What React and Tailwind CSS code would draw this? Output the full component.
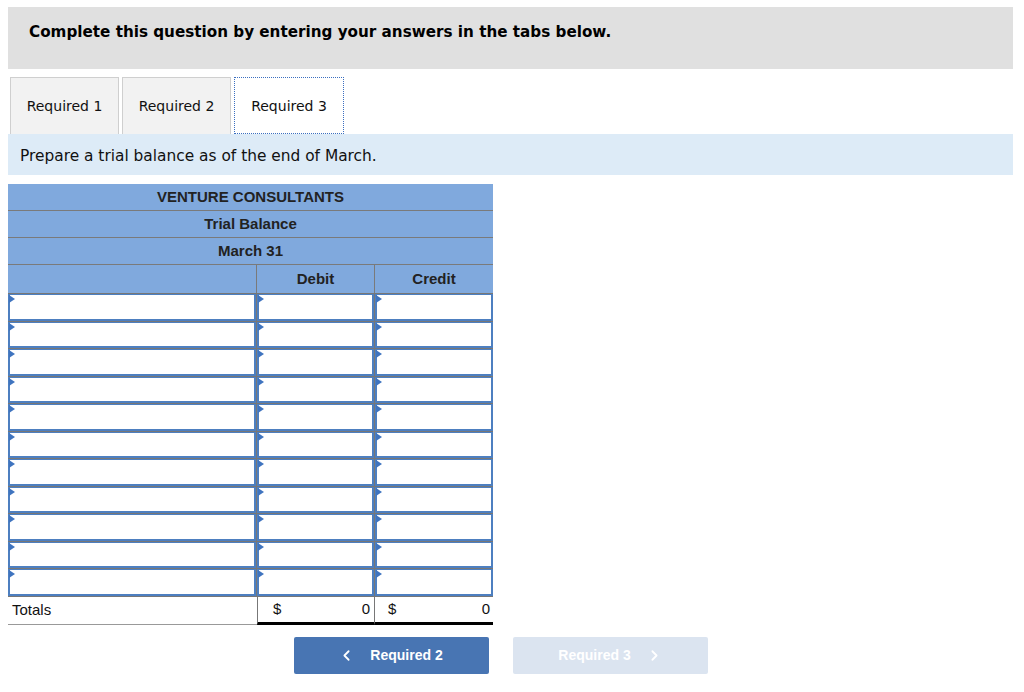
import { ChevronLeft, ChevronRight } from 'lucide-react'

const verdana = { fontFamily: 'Verdana, "DejaVu Sans", sans-serif' }

function Tab({ label, active }) {
  return active ? (
    <div className="w-[110px] h-[57px] bg-white border border-dotted border-[#3b6fc0] flex items-center justify-center pt-[2px] text-[14px] text-[#111]">{label}</div>
  ) : (
    <div className="w-[109px] h-[57px] bg-[#f2f2f2] border border-b-0 border-[#cfcfcf] flex items-center justify-center pt-[1px] text-[14px] text-[#111]">{label}</div>
  )
}

function InputCell() {
  return (
    <div className="h-full border-r border-[#777]">
      <div className="relative h-full border-2 border-[#4d7fc0] border-t-[1px] bg-white">
        <span className="absolute left-[-1px] top-0 w-0 h-0 border-y-[4px] border-y-transparent border-l-[6px] border-l-[#3f74bf]" />
      </div>
    </div>
  )
}

export default function App() {
  const rows = Array.from({ length: 11 })
  return (
    <div className="w-[1024px] h-[692px] bg-white pt-[7px] pl-[8px] pr-[11px]" style={verdana}>
      <div className="h-[62px] bg-[#e0e0e0] pl-[21px] pt-[16px]">
        <h1 className="text-[15.2px] leading-[18px] font-bold text-black">Complete this question by entering your answers in the tabs below.</h1>
      </div>
      <div className="flex gap-[3px] pl-[2px] mt-[8px]">
        <Tab label="Required 1" />
        <Tab label="Required 2" />
        <Tab label="Required 3" active />
      </div>
      <div className="h-[41px] bg-[#ddebf7] flex items-center pl-[12px] pt-[4px] text-[15.4px] text-[#111]">Prepare a trial balance as of the end of March.</div>

      <div className="mt-[9px] w-[485px] text-[15px] text-[#222]" style={{ fontFamily: 'Arial, "Liberation Sans", sans-serif' }}>
        <div className="bg-[#80a9dd] border-b border-[#7a7a7a] h-[27px] flex items-center justify-center font-bold">VENTURE CONSULTANTS</div>
        <div className="bg-[#80a9dd] border-b border-[#7a7a7a] h-[27px] flex items-center justify-center font-bold">Trial Balance</div>
        <div className="bg-[#80a9dd] border-b border-[#7a7a7a] h-[27px] flex items-center justify-center font-bold">March 31</div>
        <div className="grid grid-cols-[249px_118px_118px] bg-[#80a9dd] h-[28px] font-bold">
          <div className="border-r border-[#7a7a7a]" />
          <div className="border-r border-[#7a7a7a] flex items-center justify-center">Debit</div>
          <div className="flex items-center justify-center">Credit</div>
        </div>
        {rows.map((_, i) => (
          <div key={i} className="grid grid-cols-[249px_118px_118px] h-[27.5px] border-t border-[#777]">
            <InputCell />
            <InputCell />
            <div className="relative h-full border-2 border-[#4d7fc0] border-t-[1px] bg-white">
              <span className="absolute left-[-1px] top-0 w-0 h-0 border-y-[4px] border-y-transparent border-l-[6px] border-l-[#3f74bf]" />
            </div>
          </div>
        ))}
        <div className="grid grid-cols-[249px_118px_118px] h-[29px] border-t border-[#777]">
          <div className="border-b border-[#999] flex items-center pl-[4px] text-[#111]">Totals</div>
          <div className="border-l border-r border-[#777] border-b-[3px] border-b-black flex items-center justify-between pl-[15px] pr-[4px] text-[#111]">
            <span>$</span><span>0</span>
          </div>
          <div className="border-b-[3px] border-b-black flex items-center justify-between pl-[13px] pr-[3px] text-[#111]">
            <span>$</span><span>0</span>
          </div>
        </div>
      </div>

      <div className="flex gap-[24px] ml-[286px] mt-[12px]" style={{ fontFamily: 'Arial, "Liberation Sans", sans-serif' }}>
        <button className="w-[195px] h-[37px] rounded-[2px] bg-[#4875b3] text-white text-[14px] font-bold flex items-center justify-center gap-[15px] pr-[2px]">
          <ChevronLeft size={17} strokeWidth={2.5} />
          <span>Required 2</span>
        </button>
        <button className="w-[195px] h-[37px] rounded-[2px] bg-[#dbe4f0] text-white text-[14px] font-bold flex items-center justify-center gap-[15px]">
          <span>Required 3</span>
          <ChevronRight size={17} strokeWidth={2.5} />
        </button>
      </div>
    </div>
  )
}
